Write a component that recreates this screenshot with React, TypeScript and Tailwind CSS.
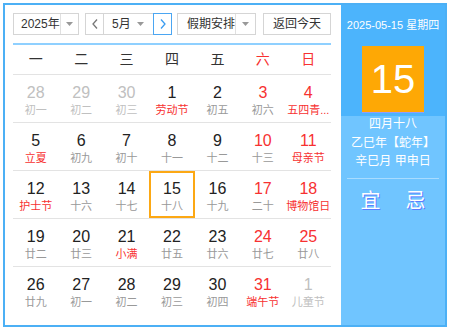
import React from 'react';

type Cell = { n: number; l: string; nc: string; lc: string; sel?: boolean };

const BLACK = 'text-[#222]';
const GRAY = 'text-[#999]';
const FADE = 'text-[#c0c0c0]';
const RED = 'text-[#f73131]';

const c = (n: number, l: string, nc = BLACK, lc = GRAY, sel = false): Cell => ({ n, l, nc, lc, sel });

const weeks: Cell[][] = [
  [c(28, '初一', FADE, FADE), c(29, '初二', FADE, FADE), c(30, '初三', FADE, FADE), c(1, '劳动节', BLACK, RED), c(2, '初五'), c(3, '初六', RED), c(4, '五四青...', RED, RED)],
  [c(5, '立夏', BLACK, RED), c(6, '初九'), c(7, '初十'), c(8, '十一'), c(9, '十二'), c(10, '十三', RED), c(11, '母亲节', RED, RED)],
  [c(12, '护士节', BLACK, RED), c(13, '十六'), c(14, '十七'), c(15, '十八', BLACK, GRAY, true), c(16, '十九'), c(17, '二十', RED), c(18, '博物馆日', RED, RED)],
  [c(19, '廿二'), c(20, '廿三'), c(21, '小满', BLACK, RED), c(22, '廿五'), c(23, '廿六'), c(24, '廿七', RED), c(25, '廿八', RED)],
  [c(26, '廿九'), c(27, '初一'), c(28, '初二'), c(29, '初三'), c(30, '初四'), c(31, '端午节', RED, RED), c(1, '儿童节', FADE, FADE)],
];

const heads = ['一', '二', '三', '四', '五', '六', '日'];

function Caret() {
  return (
    <svg width="7" height="4" viewBox="0 0 7 4">
      <path d="M0 0h7L3.5 4z" fill="#999" />
    </svg>
  );
}

function Chevron({ dir, color }: { dir: 'l' | 'r'; color: string }) {
  return (
    <svg width="6" height="10" viewBox="0 0 6 10">
      <polyline
        points={dir === 'l' ? '5,0.5 1,5 5,9.5' : '1,0.5 5,5 1,9.5'}
        fill="none"
        stroke={color}
        strokeWidth="1.3"
      />
    </svg>
  );
}

export default function App() {
  return (
    <div
      className="w-[450px] h-[330px] bg-white pt-[3px] pl-[3px]"
      style={{ fontFamily: '"Liberation Sans", "Noto Sans CJK SC", sans-serif' }}
    >
      <div className="w-[444px] h-[324px] border-2 border-[#4cb0f5] flex">
        {/* 左侧日历 */}
        <div className="w-[336px] pl-2 pr-[10px] pt-2">
          <div className="flex h-[22px] text-[12px] text-[#333] whitespace-nowrap">
            <div className="w-[66px] border border-[#d5d5d5] flex items-center">
              <span className="flex-1 pl-[7px]">2025年</span>
              <span className="w-[20px] h-full border-l border-[#e0e0e0] flex items-center justify-center">
                <Caret />
              </span>
            </div>
            <div className="w-[87px] ml-[6px] flex">
              <span className="w-[19px] border border-[#d5d5d5] flex items-center justify-center">
                <Chevron dir="l" color="#777" />
              </span>
              <span className="flex-1 border-y border-[#d5d5d5] flex items-center pl-2">
                <span className="flex-1">5月</span>
                <span className="pr-[9px] flex items-center">
                  <Caret />
                </span>
              </span>
              <span className="w-[19px] border border-[#4ba6f2] flex items-center justify-center">
                <Chevron dir="r" color="#3a9cf0" />
              </span>
            </div>
            <div className="w-[79px] ml-[5px] border border-[#d5d5d5] flex items-center">
              <span className="flex-1 pl-[9px]">假期安排</span>
              <span className="w-[20px] h-full border-l border-[#e0e0e0] flex items-center justify-center">
                <Caret />
              </span>
            </div>
            <div className="w-[68px] ml-[7px] border border-[#d5d5d5] flex items-center justify-center">
              返回今天
            </div>
          </div>

          <div className="mt-2 h-[2px] bg-[#8fd0ff]" />

          <div className="grid grid-cols-7 h-[29px] items-center text-[14px] text-center">
            {heads.map((h, i) => (
              <span key={h} className={i > 4 ? RED : 'text-[#333]'}>
                {h}
              </span>
            ))}
          </div>

          {weeks.map((w, wi) => (
            <div key={wi} className="grid grid-cols-7 h-[48px] border-t border-[#e3e3e3] text-center">
              {w.map((d, di) => (
                <div
                  key={di}
                  className={
                    d.sel
                      ? 'border-2 border-[#fca814] pt-[6px] flex flex-col items-center overflow-hidden'
                      : 'pt-2 flex flex-col items-center overflow-hidden'
                  }
                >
                  <span className={`text-[16px] leading-[19px] ${d.nc}`}>{d.n}</span>
                  <span className={`text-[11px] leading-[16px] whitespace-nowrap ${d.lc}`}>{d.l}</span>
                </div>
              ))}
            </div>
          ))}
        </div>

        {/* 右侧今日 */}
        <div className="flex-1 flex flex-col text-white">
          <div className="h-[111px] bg-[#4cb4fc] flex flex-col items-center">
            <div className="pt-3 text-[11px] leading-[16px] whitespace-nowrap">2025-05-15 星期四</div>
            <div className="mt-[13px] w-[62px] h-[66px] bg-[#fea805] shadow-[0_1px_0_#8f9dff] flex items-center justify-center text-[40px] leading-none">
              15
            </div>
          </div>
          <div className="flex-1 bg-[#70c5ff] flex flex-col items-center text-[12px]">
            <div className="leading-[16px]">四月十八</div>
            <div className="mt-[2px] leading-[18px]">乙巳年【蛇年】</div>
            <div className="leading-[18px]">辛巳月 甲申日</div>
            <div className="mt-2 w-[92px] h-px bg-[#a8dcff]" />
            <div className="mt-[10px] flex gap-[25px] text-[20px] leading-[24px] [text-shadow:1px_1px_0_#5a7dff]">
              <span>宜</span>
              <span>忌</span>
            </div>
          </div>
        </div>
      </div>
    </div>
  );
}
